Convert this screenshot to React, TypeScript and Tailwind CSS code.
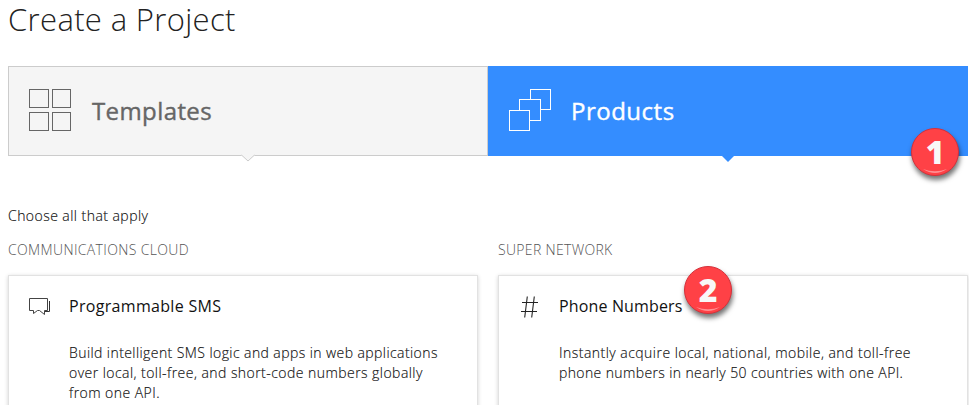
import type { ReactNode } from "react";

function TemplatesIcon() {
  return (
    <svg width="44" height="44" viewBox="0 0 44 44" fill="none" stroke="#666" className="shrink-0" shapeRendering="crispEdges">
      <rect x="1.5" y="0.5" width="19" height="18" />
      <rect x="24.5" y="0.5" width="18" height="18" />
      <rect x="1.5" y="23.5" width="19" height="18" />
      <rect x="24.5" y="23.5" width="18" height="18" />
    </svg>
  );
}

function ProductsIcon() {
  return (
    <svg width="44" height="44" viewBox="0 0 44 44" fill="#348dff" stroke="#fff" className="shrink-0" shapeRendering="crispEdges">
      <rect x="22.5" y="0.5" width="20" height="20" />
      <rect x="11.5" y="10.5" width="21" height="21" />
      <rect x="1.5" y="21.5" width="20" height="20" />
    </svg>
  );
}

function ChatIcon() {
  return (
    <svg width="22" height="19" viewBox="0 0 22 19" fill="none" stroke="#333" className="shrink-0">
      <path d="M0.5 1.5H18.5V13.5H15.5V17.5L10.5 13.5H8.5L4.5 16.5V13.5H0.5Z" stroke="#444" />
      <path d="M20.5 4V14.5H16" />
    </svg>
  );
}

function HashIcon() {
  return (
    <svg width="17" height="22" viewBox="0 0 17 22" fill="none" stroke="#222" strokeWidth="1.1" className="shrink-0">
      <path d="M6.3 0.5L3.7 21.5M13.3 0.5L10.7 21.5M1 6.5H17M0 15.5H16" />
    </svg>
  );
}

function Marker({ children, className }: { children: ReactNode; className: string }) {
  return (
    <div
      className={`absolute flex h-12 w-12 items-center justify-center rounded-full border border-[#d6303a] bg-[#ff4146] shadow-[1px_4px_5px_rgba(0,0,0,0.55)] ${className}`}
    >
      <svg width="46" height="46" viewBox="0 0 46 46" fill="none" className="absolute inset-0">
        <path d="M11 40Q23 48 35 40Q23 44.5 11 40Z" fill="#ff8f92" />
      </svg>
      <span className="relative font-['Open_Sans',sans-serif] text-[32px] leading-none font-extrabold text-[#f8f8f8]">{children}</span>
    </div>
  );
}

function Card({ icon, title, titleClass, children }: { icon: ReactNode; title: string; titleClass: string; children: ReactNode }) {
  return (
    <article className="h-[160px] w-[470px] border border-[#e2e2e2] bg-white pt-[19px] pl-5 shadow-[0_1px_4px_rgba(0,0,0,0.18)]">
      <div className="flex h-[22px] items-center">
        <div className="flex w-10 shrink-0 pt-px">{icon}</div>
        <h2 className={`text-[16px] leading-[22px] text-[#111] ${titleClass}`}>{title}</h2>
      </div>
      <div className="mt-[26px] ml-10 text-[14px] leading-5 font-light whitespace-nowrap text-[#111] [-webkit-text-stroke:0.15px_#111]">{children}</div>
    </article>
  );
}

export default function App() {
  return (
    <main className="relative h-[405px] w-[969px] overflow-hidden bg-white pl-2 font-['Open_Sans',sans-serif]">
      <h1 className="h-[66px] text-[31px] leading-[38px] font-light tracking-[0.35px] text-[#222]">Create a Project</h1>
      <nav className="flex h-[90px] w-[960px]">
        <div className="relative flex w-[480px] items-center border border-[#ccc] bg-[#f5f5f5] pl-[19px] text-[#666]">
          <TemplatesIcon />
          <span className="ml-5 text-[24px] leading-8 tracking-[0.4px] [-webkit-text-stroke:0.4px_#666]">Templates</span>
          <svg width="14" height="8" viewBox="0 0 14 8" className="absolute top-[87px] left-[232px]">
            <path d="M0 0H14V1L7 7L0 1Z" fill="#f5f5f5" />
            <path d="M0.5 1L7 7L13.5 1" fill="none" stroke="#ccc" />
          </svg>
        </div>
        <div className="relative flex w-[480px] items-center bg-[#348dff] pl-5 text-white">
          <ProductsIcon />
          <span className="ml-[19px] text-[24px] leading-8 tracking-[0.5px] [-webkit-text-stroke:0.4px_#fff]">Products</span>
          <svg width="14" height="7" viewBox="0 0 14 7" className="absolute top-[89px] left-[233px]">
            <path d="M0 0H14L7 7Z" fill="#348dff" />
          </svg>
        </div>
      </nav>
      <p className="mt-[50px] text-[14px] leading-5 font-light tracking-[0.45px] text-[#111] [-webkit-text-stroke:0.15px_#111]">Choose all that apply</p>
      <div className="mt-[14px] flex gap-5">
        <section>
          <h3 className="mb-[15px] text-[14px] leading-5 font-light tracking-[0.36px] text-[#555]">COMMUNICATIONS CLOUD</h3>
          <Card icon={<ChatIcon />} title="Programmable SMS" titleClass="tracking-[0.31px]">
            <p><span className="tracking-[0.42px]">Build intelligent SMS logic and apps in web applications</span></p>
            <p><span className="tracking-[0.45px]">over local, toll-free, and short-code numbers globally</span></p>
            <p><span className="tracking-[0.45px]">from one API.</span></p>
          </Card>
        </section>
        <section>
          <h3 className="mb-[15px] text-[14px] leading-5 font-light tracking-[0.32px] text-[#555]">SUPER NETWORK</h3>
          <Card icon={<span className="pl-[2px]"><HashIcon /></span>} title="Phone Numbers" titleClass="tracking-[0.15px]">
            <p><span className="tracking-[0.47px]">Instantly acquire local, national, mobile, and toll-free</span></p>
            <p><span className="tracking-[0.38px]">phone numbers in nearly 50 countries with one API.</span></p>
          </Card>
        </section>
      </div>
      <Marker className="top-[128px] left-[911px]">1</Marker>
      <Marker className="top-[266px] left-[684px]">2</Marker>
    </main>
  );
}
